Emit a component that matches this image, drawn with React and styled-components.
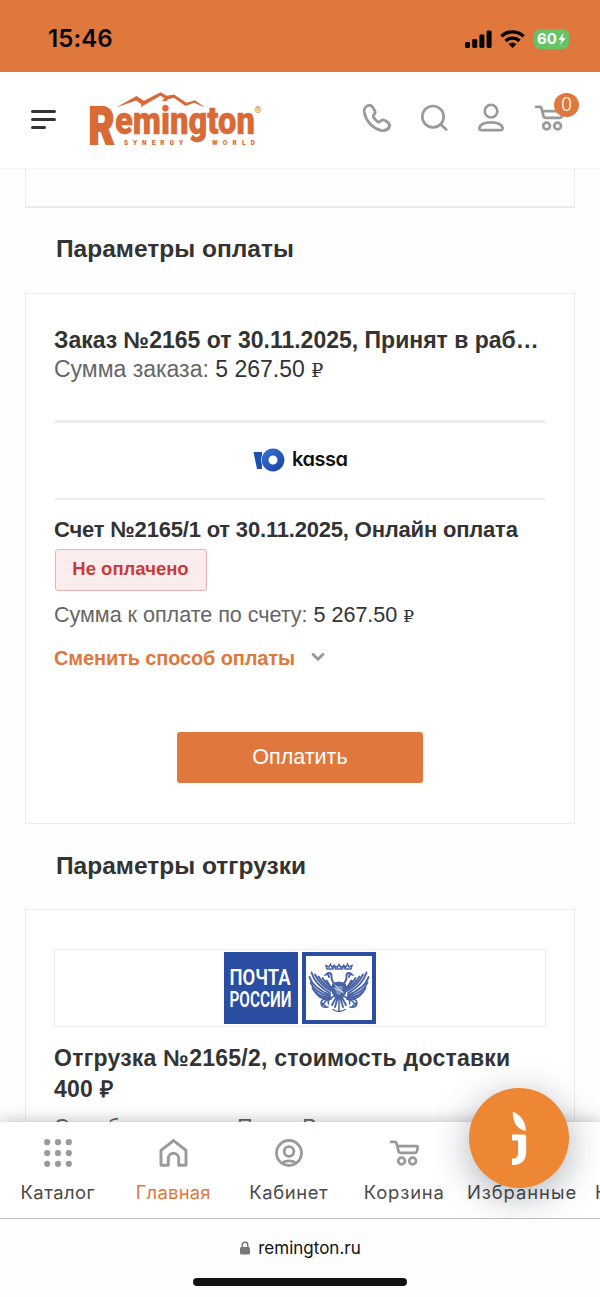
import React from "react";
import styled, { createGlobalStyle, ThemeProvider } from "styled-components";

const theme = {
  color: {
    main: "#e0783e",
    logo: "#d96a35",
    post: "#2b4ea2",
    font1: "#333333",
    font2: "#666666",
    icon: "#9a9a9a",
    line: "#ececec",
  },
  font: {
    base: `"Liberation Sans", Arial, sans-serif`,
    ui: `Inter, "Liberation Sans", sans-serif`,
  },
};

const GlobalStyle = createGlobalStyle`
  * { box-sizing: border-box; }
  body {
    margin: 0;
    background: #fff;
  }
  svg { display: block; flex-shrink: 0; overflow: visible; }
`;

const Wrappers = styled.div`
  width: 600px;
  height: 1297px;
  display: flex;
  flex-direction: column;
  overflow: hidden;
  background: #fefefe;
  color: ${props => props.theme.color.font1};
  font-family: ${props => props.theme.font.base};
`;

/* status bar */
const StatusBar = styled.div`
  flex: none;
  height: 72px;
  padding: 5px 31px 0 48px;
  display: flex;
  align-items: center;
  justify-content: space-between;
  background: ${props => props.theme.color.main};
`;
const Time = styled.div`
  font: 600 24px/28px ${props => props.theme.font.ui};
  letter-spacing: 0.1px;
  color: #000;
`;
const StatusIcons = styled.div`
  display: flex;
  align-items: center;
  gap: 8px;
`;
const Battery = styled.div`
  display: flex;
  align-items: center;
  justify-content: center;
  gap: 1px;
  width: 35px;
  height: 20px;
  margin-left: 1px;
  border-radius: 6px;
  background: #65c466;
  color: #fff;
  font: 700 15px/20px ${props => props.theme.font.ui};
`;

/* site header */
const Header = styled.header`
  flex: none;
  height: 97px;
  padding: 0 19px 2px 31px;
  display: flex;
  align-items: center;
  background: #fff;
  border-bottom: 1px solid #f3f3f3;
`;
const MenuButton = styled.div`
  display: flex;
  flex-direction: column;
  gap: 5px;
  width: 26px;
  margin-right: 29px;
`;
const MenuLine = styled.span`
  height: 3px;
  width: ${props => props.$width || 25}px;
  border-radius: 2px;
  background: #333;
`;
const HeaderIcons = styled.div`
  display: flex;
  align-items: center;
  gap: 28px;
  margin-left: auto;
  margin-right: 16px;
  padding-bottom: 2px;
  color: ${props => props.theme.color.icon};
`;
const CartBox = styled.div`
  position: relative;
`;
const CartCount = styled.span`
  position: absolute;
  top: -11px;
  right: -14px;
  width: 25px;
  height: 24px;
  border-radius: 50%;
  background: ${props => props.theme.color.main};
  color: #fff;
  font: 300 18px/24px ${props => props.theme.font.ui};
  text-align: center;
`;

/* order content */
const Content = styled.main`
  flex: 1;
  min-height: 0;
  overflow: hidden;
  padding: 0 25px;
`;
const PrevCard = styled.section`
  height: 39px;
  border: 1px solid ${props => props.theme.color.line};
  border-top: 0;
  border-bottom-width: 2px;
`;
const SectionTitle = styled.h2`
  margin: 0;
  height: 85px;
  padding: 0 0 ${props => props.$bottom || 2}px 31px;
  display: flex;
  align-items: center;
  font-size: 24.5px;
  font-weight: 700;
`;
const Card = styled.section`
  height: ${props => props.$height}px;
  padding: 0 28px;
  border: 1px solid ${props => props.theme.color.line};
  background: #fff;
`;
const OrderTitle = styled.div`
  margin-top: 31px;
  font-size: 23px;
  line-height: 30px;
  font-weight: 700;
  white-space: nowrap;
`;
const SumText = styled.div`
  font-size: 23px;
  line-height: 29px;
  color: ${props => props.theme.color.font2};
  white-space: nowrap;
`;
const Price = styled.span`
  color: ${props => props.theme.color.font1};
`;
const Ruble = styled.span`
  font-family: "Liberation Serif", "DejaVu Serif", serif;
  font-size: ${props => props.$size || 19}px;
`;
const Divider = styled.div`
  height: ${props => props.$size || 2}px;
  margin: ${props => props.$top || 0}px 1px 0;
  background: ${props => props.theme.color.line};
`;
const KassaBox = styled.div`
  height: 75px;
  padding-bottom: 2px;
  display: flex;
  align-items: center;
  justify-content: center;
`;
const BillTitle = styled.div`
  margin-top: 15px;
  font-size: 22px;
  line-height: 30px;
  font-weight: 700;
  letter-spacing: -0.19px;
  white-space: nowrap;
`;
const Badge = styled.div`
  width: 152px;
  height: 42px;
  margin: 4px 0 9px 1px;
  display: flex;
  align-items: center;
  justify-content: center;
  padding: 0 1px 2px 0;
  border: 1px solid #e9b3b6;
  border-radius: 3px;
  background: #fbeced;
  color: #c93a3a;
  font-size: 18.5px;
  font-weight: 700;
`;
const BillSum = styled(SumText)`
  font-size: 21.6px;
  line-height: 30px;
  letter-spacing: -0.04px;
`;
const ChangeLink = styled.div`
  display: flex;
  align-items: center;
  gap: 16px;
  margin-top: 11px;
  color: ${props => props.theme.color.main};
  font-size: 20px;
  line-height: 30px;
  font-weight: 700;
  letter-spacing: -0.14px;
  svg { color: #999; margin-top: -3px; }
`;
const PayButton = styled.div`
  width: 246px;
  height: 51px;
  margin: 59px auto 0;
  border-radius: 3px;
  background: ${props => props.theme.color.main};
  color: #fff;
  font-size: 21.5px;
  line-height: 50px;
  text-align: center;
`;
const DeliveryBox = styled.div`
  height: 78px;
  margin-top: 39px;
  display: flex;
  align-items: center;
  justify-content: center;
  gap: 4px;
  border: 1px solid ${props => props.theme.color.line};
`;
const DeliveryTitle = styled.div`
  margin-top: 16px;
  font-size: 23px;
  line-height: 30.5px;
  font-weight: 700;
  letter-spacing: 0.24px;
`;
const DeliveryText = styled(SumText)`
  margin-top: 9px;
  font-size: 21.3px;
`;

/* bottom tabs */
const TabBar = styled.nav`
  position: relative;
  flex: none;
  height: 97px;
  display: flex;
  background: #fff;
  border-bottom: 1px solid #bdbdbd;
  box-shadow: 0 0 16px rgba(0, 0, 0, 0.28);
`;
const Tab = styled.div`
  flex: none;
  width: ${props => props.$width || 115.5}px;
  padding: 17px 0 0;
  display: flex;
  flex-direction: column;
  align-items: ${props => props.$cut ? "flex-start" : "center"};
  gap: 13px;
  color: ${props => props.theme.color.icon};
`;
const TabIcon = styled.div`
  height: 28px;
  display: flex;
  align-items: center;
`;
const TabName = styled.div`
  padding-left: ${props => props.$cut ? 13 : 0}px;
  font: 400 18.4px/24px ${props => props.theme.font.ui};
  letter-spacing: ${props => props.$spacing || 0}px;
  color: ${props => props.$active ? props.theme.color.main : "#4a4a4a"};
  white-space: nowrap;
`;
const ChatButton = styled.div`
  position: absolute;
  top: -34px;
  left: 469px;
  width: 100px;
  height: 100px;
  border-radius: 50%;
  background: #ed8733;
  box-shadow: 0 8px 36px rgba(20, 25, 45, 0.34);
`;

/* browser bar */
const BrowserBar = styled.footer`
  position: relative;
  flex: none;
  height: 78px;
  padding-top: 17px;
  display: flex;
  flex-direction: column;
  align-items: center;
  background: #fdfdfd;
`;
const Address = styled.div`
  display: flex;
  align-items: center;
  gap: 8px;
  height: 24px;
  padding-left: 1px;
  font: 400 17px/24px ${props => props.theme.font.ui};
  color: #111;
`;
const HomeLine = styled.div`
  width: 214px;
  height: 8px;
  margin-top: 18px;
  border-radius: 4px;
  background: #111;
`;

const LogoText = styled.text`
  font-family: Roboto, sans-serif;
  font-weight: 900;
  fill: ${props => props.theme.color.logo};
  stroke: ${props => props.theme.color.logo};
  stroke-width: ${props => props.$stroke || 0};
`;
const KassaText = styled.text`
  font: 600 20px Inter, sans-serif;
  font-feature-settings: "cv11";
  fill: #111;
`;

const Signal = () => (
  <svg width="27" height="18" viewBox="0 0 27 18">
    <rect x="0" y="12" width="5" height="6" rx="1.4" />
    <rect x="7.2" y="9" width="5" height="9" rx="1.4" />
    <rect x="14.4" y="4.6" width="5" height="13.4" rx="1.4" />
    <rect x="21.6" y="0.5" width="5" height="17.5" rx="1.4" />
  </svg>
);

const Wifi = () => (
  <svg width="25" height="18" viewBox="0 0 25 18" fill="none" stroke="#000" strokeWidth="3.4">
    <path d="M1.4 6.4a15.8 15.8 0 0 1 22.2 0" />
    <path d="M5.6 11a9.8 9.8 0 0 1 13.8 0" />
    <path d="M12.5 18l-3.9-3.9a5.6 5.6 0 0 1 7.8 0z" fill="#000" stroke="none" />
  </svg>
);

const Bolt = () => (
  <svg width="8" height="12" viewBox="0 0 8 12" fill="#fff">
    <path d="M5.6 0L0.4 6.8h2.9L2.2 12l5.4-7H4.6z" />
  </svg>
);

const Logo = () => (
  <svg width="176" height="58" viewBox="0 0 176 58" fill={theme.color.logo}>
    <path d="M30 17.5L50.5 6l7.5 4.800L74.500 2.300l6 3.500 7.500-1.200 12.500 8.200 8.500-2.500L119 17.500l-10.800-4.700-8.700 3.200-11.700-8.300-5 1.200-2.800 2.300-4-.2 2.400-2.700-4-2.500-15.700 9-4.200 2.400 1-2.600-5.200-4.200z" />
    <LogoText x="2.5" y="54" fontSize="51" textLength="26" lengthAdjust="spacingAndGlyphs" $stroke={1.8}>R</LogoText>
    <LogoText x="29" y="44" fontSize="38" textLength="140" lengthAdjust="spacingAndGlyphs" $stroke={0.5}>emington</LogoText>
    <LogoText x="38" y="54.500" fontSize="6.500" textLength="59">SYNERGY</LogoText>
    <LogoText x="126" y="54.500" fontSize="6.500" textLength="43">WORLD</LogoText>
    <text x="168.500" y="23" fontSize="9" fontFamily="Roboto, sans-serif">®</text>
  </svg>
);

const Phone = () => (
  <svg width="30" height="30" viewBox="0 0 30 30" fill="none" stroke="currentColor" strokeWidth="2.8" strokeLinejoin="round">
    <path d="M5.200 2.900C2.700 4.300 1.600 7 2.500 10.500c2 8.200 8.300 14.800 16.300 16.800 3.600.8 7-.5 8.500-3.300.9-2 .1-3.500-1.500-4.700l-3-1.900c-1.800-.9-3.300-.4-4.400.9-.8.900-1.800 1-2.800.3-2-1.300-3.300-2.800-4.200-4.700-.4-.9-.2-1.700.6-2.400 1.200-1.100 1.500-2.500.6-4.100L10.700 4.300C9.500 2.400 7.200 1.900 5.200 2.900z" />
  </svg>
);

const Search = () => (
  <svg width="30" height="30" viewBox="0 0 30 30" fill="none" stroke="currentColor" strokeWidth="2.7" strokeLinecap="round">
    <circle cx="13" cy="13.700" r="10.700" />
    <path d="M20.800 21.500l5.400 5" />
  </svg>
);

const User = () => (
  <svg width="28" height="30" viewBox="0 0 28 30" fill="none" stroke="currentColor" strokeWidth="2.7">
    <circle cx="13" cy="8.200" r="6.300" />
    <path d="M3.500 27.200h19c1.600 0 2.300-.7 2.100-2.200-.7-3.500-5.100-5.600-11.600-5.600s-10.900 2.100-11.600 5.600c-.2 1.500.5 2.200 2.100 2.200z" />
  </svg>
);

const Cart = () => (
  <svg width="31" height="28" viewBox="0 0 31 28" fill="none" stroke="currentColor" strokeWidth="2.7" strokeLinejoin="round" strokeLinecap="round">
    <path d="M2 2.800h4c.8 0 1.200.3 1.400 1l2.100 8.400c.3 1.200 1 1.700 2.200 1.700h14c1.200 0 1.800-.5 2.100-1.600l.9-3.400c.3-1.200-.2-1.800-1.400-1.800H8.500" />
    <circle cx="12.600" cy="22" r="3.400" />
    <circle cx="23.600" cy="22" r="3.400" />
  </svg>
);

const Kassa = () => (
  <svg width="97" height="30" viewBox="0 0 97 30">
    <defs>
      <linearGradient id="kassa" x1="0" y1="0" x2="1" y2="1">
        <stop offset="0" stopColor="#3a72d8" />
        <stop offset="1" stopColor="#15439f" />
      </linearGradient>
    </defs>
    <path d="M1.500 7h8.500v17H5z" fill="#1d4fae" />
    <circle cx="21" cy="15" r="11.900" fill="#fff" />
    <path d="M21 3.600a11.400 11.400 0 1 0 0 22.800 11.400 11.400 0 0 0 0-22.800zm0 6.900a4.500 4.500 0 1 1 0 9 4.500 4.500 0 0 1 0-9z" fill="url(#kassa)" />
    <KassaText x="40" y="20.500" textLength="56">kassa</KassaText>
  </svg>
);

const Chevron = () => (
  <svg width="14" height="10" viewBox="0 0 14 10" fill="none" stroke="currentColor" strokeWidth="2.8">
    <path d="M1.200 1.500L7 7.300l5.800-5.800" />
  </svg>
);

const PostName = () => (
  <svg width="74" height="72" viewBox="0 0 74 72" fontFamily="Roboto, sans-serif" fontWeight="600" fill="#fff">
    <rect width="74" height="72" fill={theme.color.post} />
    <text x="5.500" y="33.300" fontSize="21.500" textLength="61" lengthAdjust="spacingAndGlyphs">ПОЧТА</text>
    <text x="5.500" y="54.600" fontSize="21.500" textLength="62" lengthAdjust="spacingAndGlyphs">РОССИИ</text>
  </svg>
);

const feathers = [
  "M28 45C19 40 12 33 9.500 24.500",
  "M28 47C18 43 10 37 7.500 29",
  "M28 48.500C18 46 11 41 8.500 34.500",
  "M28 50C19 49 13 45.500 10.500 40",
  "M29 51C22 52 17 49.500 14 45",
  "M29 43C22 39 16 33 13 26.500",
  "M29 41C23 37 19 33 16.500 28.500",
  "M30 39.500C25 36 22.500 33.500 20.500 30",
  "M30 42C28 38 26 35 24.500 32.500",
];

const Wing = () => feathers.map((d) => <path key={d} d={d} />);

const EagleHalf = () => (
  <g>
    <Wing />
    <path d="M35 38c-4-3-6-6-5.500-10 .3-3.500-3.500-4-5.500-1.500 2-.5 3 .5 3 2.500" />
    <path d="M25 21l-1-3.500 3 1.500 1.500-3 1.500 3 2-1.500-1 3.500z" strokeWidth="1.400" />
    <path d="M33 48l-7 3-6 6m6-6l.5 5m-7-1.500l4 3.500M27 52q-8-2-8 3t7 4" strokeWidth="1.500" />
    <path d="M35 48l-5 9m6-8l-3 10" />
  </g>
);

const PostEagle = () => (
  <svg width="74" height="72" viewBox="0 0 74 72">
    <rect x="2" y="2" width="70" height="68" fill="#fff" stroke={theme.color.post} strokeWidth="4" />
    <g transform="translate(0 1)" fill="none" stroke="#4763a6" strokeWidth="1.900" strokeLinecap="round">
      <g transform="translate(0 -5)"><EagleHalf /></g>
      <g transform="translate(74 -5) scale(-1 1)"><EagleHalf /></g>
      <path d="M33.500 16l-.8-3 2.600 1.200L37 11.500l1.700 2.700 2.600-1.200-.8 3zM31 56.500q6 4 12 0M37 47v11" strokeWidth="1.500" />
      <path d="M30 31q7-5 14 0v9q-2 5-7 7-5-2-7-7z" fill="#4763a6" stroke="none" />
      <path d="M33.500 33h7v5q-1 3-3.500 4.500-2.500-1.500-3.500-4.500z" fill="#7d91c4" stroke="none" />
      <path d="M32 35l9 4M33 32l8 8" stroke="#dfe6f5" strokeWidth=".8" />
    </g>
  </svg>
);

const Grid = () => (
  <svg width="28" height="28" viewBox="0 0 28 28" fill="currentColor">
    {[3.2, 14, 24.800].map((y) => [3.2, 14, 24.800].map((x) => <circle key={x + "_" + y} cx={x} cy={y} r="3.100" />))}
  </svg>
);

const Home = () => (
  <svg width="30" height="30" viewBox="0 0 30 30" fill="none" stroke="currentColor" strokeWidth="2.900" strokeLinejoin="round">
    <path d="M3 12.300L15.500 2.600 28 12.300v14.900h-7.300v-6.700a5.200 5.200 0 0 0-10.400 0v6.700H3z" />
  </svg>
);

const Account = () => (
  <svg width="28" height="28" viewBox="0 0 28 28" fill="none" stroke="currentColor" strokeWidth="2.800">
    <circle cx="14" cy="14" r="12.500" />
    <circle cx="14" cy="12.500" r="4.800" />
    <path d="M7.500 24.300c1.300-1.900 3.700-2.400 6.500-2.400s5.200.5 6.500 2.400" />
  </svg>
);

const ChatMark = () => (
  <svg width="100" height="100" viewBox="0 0 100 100" fill="#fff">
    <path d="M43.800 23.500C52 27 56.800 34 56.800 43 49 41.500 43.500 35.500 43.800 23.500z" />
    <path d="M43 46.500h11.500q2.700 0 2.700 2.700v14.300c0 9-5 13.500-13.200 13.500h-1v-6.500h1c3.200 0 5-2 5-6V52.500H43z" />
  </svg>
);

const Lock = () => (
  <svg width="10" height="14" viewBox="0 0 10 14" fill="#777">
    <rect y="6" width="10" height="7.500" rx="1.500" />
    <path d="M2.200 7V4a2.800 2.800 0 0 1 5.600 0v3" fill="none" stroke="#777" strokeWidth="1.400" />
  </svg>
);

const tabs = [
  { name: "Каталог", icon: <Grid />, spacing: 0.45 },
  { name: "Главная", icon: <Home />, spacing: 0.25, active: true },
  { name: "Кабинет", icon: <Account />, spacing: 0.6 },
  { name: "Корзина", icon: <Cart />, spacing: 0.85 },
  { name: "Избранные", width: 120, spacing: 0.95 },
  { name: "Компания", cut: true },
];

const App = () => {
  return (
    <ThemeProvider theme={theme}>
      <GlobalStyle />
      <Wrappers>
        <StatusBar>
          <Time>15:46</Time>
          <StatusIcons>
            <Signal />
            <Wifi />
            <Battery>60<Bolt /></Battery>
          </StatusIcons>
        </StatusBar>
        <Header>
          <MenuButton>
            <MenuLine />
            <MenuLine />
            <MenuLine $width={15} />
          </MenuButton>
          <Logo />
          <HeaderIcons>
            <Phone />
            <Search />
            <User />
            <CartBox>
              <Cart />
              <CartCount>0</CartCount>
            </CartBox>
          </HeaderIcons>
        </Header>
        <Content>
          <PrevCard />
          <SectionTitle $bottom={4}>Параметры оплаты</SectionTitle>
          <Card $height={531}>
            <OrderTitle>Заказ №2165 от 30.11.2025, Принят в раб…</OrderTitle>
            <SumText>Сумма заказа: <Price>5 267.50 <Ruble>₽</Ruble></Price></SumText>
            <Divider $size={3} $top={35} />
            <KassaBox><Kassa /></KassaBox>
            <Divider />
            <BillTitle>Счет №2165/1 от 30.11.2025, Онлайн оплата</BillTitle>
            <Badge>Не оплачено</Badge>
            <BillSum>Сумма к оплате по счету: <Price>5 267.50 <Ruble $size={17}>₽</Ruble></Price></BillSum>
            <ChangeLink>Сменить способ оплаты<Chevron /></ChangeLink>
            <PayButton>Оплатить</PayButton>
          </Card>
          <SectionTitle>Параметры отгрузки</SectionTitle>
          <Card $height={400}>
            <DeliveryBox>
              <PostName />
              <PostEagle />
            </DeliveryBox>
            <DeliveryTitle>Отгрузка №2165/2, стоимость доставки 400 ₽</DeliveryTitle>
            <DeliveryText>Служба доставки: Почта России</DeliveryText>
          </Card>
        </Content>
        <TabBar>
          {tabs.map((tab) => (
            <Tab key={tab.name} $width={tab.width} $cut={tab.cut}>
              <TabIcon>{tab.icon}</TabIcon>
              <TabName $active={tab.active} $cut={tab.cut} $spacing={tab.spacing}>{tab.name}</TabName>
            </Tab>
          ))}
          <ChatButton><ChatMark /></ChatButton>
        </TabBar>
        <BrowserBar>
          <Address><Lock />remington.ru</Address>
          <HomeLine />
        </BrowserBar>
      </Wrappers>
    </ThemeProvider>
  );
};

export default App;
